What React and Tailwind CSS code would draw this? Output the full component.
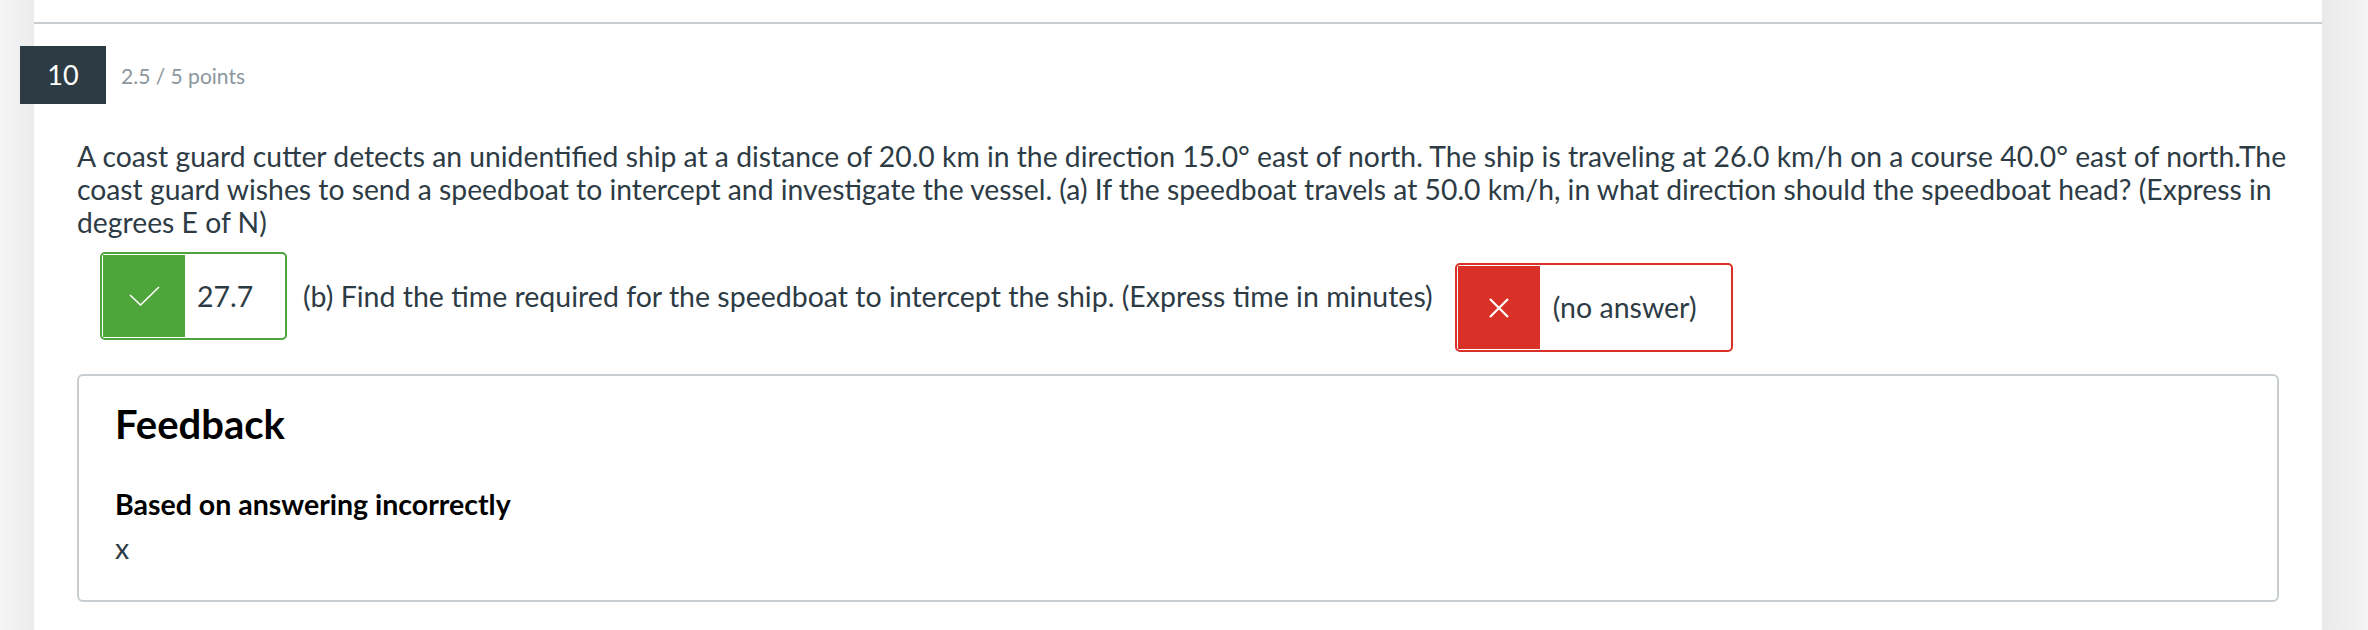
import React from "react";

const font = { fontFamily: "Lato, 'Noto Sans', sans-serif" };

function CheckIcon() {
  return (
    <svg width="31" height="20" viewBox="0 0 31 20" fill="none">
      <path d="M1 9 L11.5 19 L30 1" stroke="white" strokeWidth="1.6" />
    </svg>
  );
}

function CrossIcon() {
  return (
    <svg width="20" height="20" viewBox="0 0 20 20" fill="none">
      <path d="M1 1 L19 19 M19 1 L1 19" stroke="white" strokeWidth="2.2" />
    </svg>
  );
}

export default function App() {
  return (
    <div
      className="flex h-[630px] w-full bg-[#f5f5f5] text-[#2d3b45]"
      style={font}
    >
      <div className="w-[34px] shrink-0 bg-linear-to-r from-[#f5f5f5] to-[#ececec]" />

      <div className="flex-1 bg-white pt-[22px]">
        <div className="border-t-2 border-[#c7cdd1]" />

        <div className="mt-[22px] flex items-center">
          <div className="-ml-[14px] flex h-[58px] w-[86px] items-center justify-center bg-[#2d3b45] text-[27px] text-white">
            10
          </div>
          <div className="ml-[15px] pt-[2px] text-[21px] text-[#8b969e]">
            2.5 / 5 points
          </div>
        </div>

        <div className="pl-[43px] pr-[43px] pt-[36px]">
          <p className="-mr-[24px] text-[28.3px] leading-[33px]">
            A coast guard cutter detects an unidentified ship at a distance of
            20.0 km in the direction 15.0° east of north. The ship is traveling
            at 26.0 km/h on a course 40.0° east of north.The coast guard wishes
            to send a speedboat to intercept and investigate the vessel. (a) If
            the speedboat travels at 50.0 km/h, in what direction should the
            speedboat head? (Express in degrees E of N)
          </p>

          <div className="mt-[13px] flex items-start pl-[23px]">
            <div className="flex h-[88px] w-[187px] shrink-0 rounded-[5px] border-2 border-[#4ea63b] p-px">
              <div className="flex w-[82px] items-center justify-center bg-[#4ea63b]">
                <CheckIcon />
              </div>
              <div className="flex items-center pl-[12px] text-[28.5px]">
                27.7
              </div>
            </div>

            <div className="flex h-[88px] shrink-0 items-center pl-[16px] text-[28.5px]">
              (b) Find the time required for the speedboat to intercept the
              ship. (Express time in minutes)
            </div>

            <div className="ml-[22px] mt-[11px] flex h-[89px] w-[278px] shrink-0 rounded-[5px] border-2 border-[#d93027] p-px">
              <div className="flex w-[82px] items-center justify-center bg-[#d93027]">
                <CrossIcon />
              </div>
              <div className="flex items-center pl-[13px] text-[28.5px]">
                (no answer)
              </div>
            </div>
          </div>

          <div className="mt-[22px] rounded-[6px] border-2 border-[#c7cdd1] pb-[35px] pl-[36px] pt-[24px]">
            <h3 className="text-[40px] font-bold leading-[48px] text-black">
              Feedback
            </h3>
            <div className="mt-[39px] text-[28.5px] font-bold leading-[34px] text-black">
              Based on answering incorrectly
            </div>
            <div className="mt-[11px] text-[28.5px] leading-[33px]">x</div>
          </div>
        </div>
      </div>

      <div className="w-[46px] shrink-0 bg-linear-to-r from-[#e9e9e9] to-[#f4f4f4]" />
    </div>
  );
}
